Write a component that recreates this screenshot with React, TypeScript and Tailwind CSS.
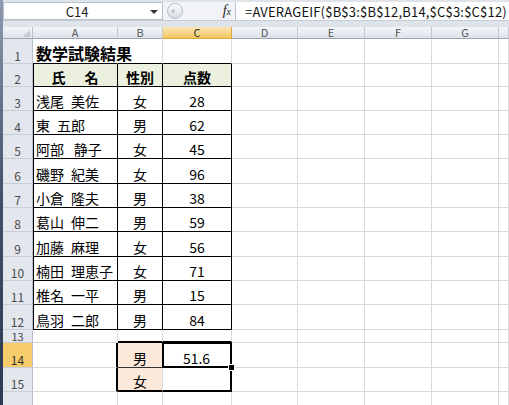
import React from "react";

const FONT = "font-['Noto_Sans_CJK_JP','Noto_Sans',sans-serif]";

const students = [
  ["浅尾\u2002美佐", "女", "28"],
  ["東\u2002五郎", "男", "62"],
  ["阿部\u2002\u2009静子", "女", "45"],
  ["磯野\u2002紀美", "女", "96"],
  ["小倉\u2002隆夫", "男", "38"],
  ["葛山\u2002伸二", "男", "59"],
  ["加藤\u2002麻理", "女", "56"],
  ["楠田\u2002理恵子", "女", "71"],
  ["椎名\u2002一平", "男", "15"],
  ["鳥羽\u2002二郎", "男", "84"],
];

const colWidths = ["w-[85px]", "w-[45px]", "w-[69px]", "w-[66px]", "w-[67px]", "w-[67px]", "w-[67px]", "flex-1"];
const colNames = ["A", "B", "C", "D", "E", "F", "G", ""];

// heights of rows 1..16
const rowHeights = [
  "h-[25px]", "h-[23px]",
  "h-[24px]", "h-[24px]", "h-[24px]", "h-[25px]", "h-[24px]",
  "h-[24px]", "h-[25px]", "h-[24px]", "h-[24px]", "h-[25px]",
  "h-[13px]", "h-[25px]", "h-[24px]", "h-[25px]",
];

function borders(r: number, c: number) {
  let right = "border-r border-r-[#d9d9d9]";
  let bottom = "border-b border-b-[#d9d9d9]";
  let extra = "";
  if (r >= 2 && r <= 12 && c <= 2) {
    right = "border-r border-r-black";
    bottom = "border-b border-b-black";
    if (c === 0) extra = "shadow-[inset_1px_0_0_#000]";
  }
  if (r === 1 && c <= 2) bottom = "border-b border-b-black";
  if (r === 1 && c === 0) right = "border-r border-r-transparent";
  if (r === 13 && (c === 1 || c === 2)) bottom = "border-b-2 border-b-black";
  if ((r === 14 || r === 15) && (c === 0 || c === 2)) right = "border-r-2 border-r-black";
  if (r === 15 && (c === 1 || c === 2)) bottom = "border-b-2 border-b-black";
  if (r === 14 && c === 1) bottom = "border-b border-b-[#333]";
  return `${right} ${bottom} ${extra}`;
}

function background(r: number, c: number) {
  if (r === 2 && c <= 2) return "bg-[#ebf1de]";
  if ((r === 14 || r === 15) && c === 1) return "bg-[#fde9d9]";
  return "bg-white";
}

function content(r: number, c: number): React.ReactNode {
  if (r === 1 && c === 0)
    return <span className="relative z-10 pl-[3px] text-[16px] font-bold whitespace-nowrap">数学試験結果</span>;
  if (r === 2) {
    if (c === 0)
      return (
        <span className="w-full flex justify-center gap-[19px] font-bold">
          <span>氏</span>
          <span>名</span>
        </span>
      );
    if (c === 1) return <span className="w-full text-center font-bold">性別</span>;
    if (c === 2) return <span className="w-full text-center font-bold">点数</span>;
  }
  if (r >= 3 && r <= 12 && c <= 2) {
    const v = students[r - 3][c];
    if (c === 0) return <span className="pl-[3px] whitespace-pre">{v}</span>;
    return <span className="w-full text-center">{v}</span>;
  }
  if (r === 14 && c === 1) return <span className="w-full text-center">男</span>;
  if (r === 15 && c === 1) return <span className="w-full text-center">女</span>;
  if (r === 14 && c === 2) return <span className="w-full text-center">51.6</span>;
  return null;
}

const FormulaBar = () => (
  <div className="h-[27px] shrink-0 bg-[#dfe4ea] pt-[2px]">
    <div className="h-[19px] flex bg-[#f1f3f6] border-b border-b-[#c6ccd5]">
      <div className="w-[160px] bg-white border border-[#b9c1cc] flex items-center relative">
        <span className="flex-1 text-center pr-[12px] text-[13px] leading-none text-[#222]">C14</span>
        <span className="absolute right-[4px] top-[7px] w-0 h-0 border-l-[4px] border-r-[4px] border-t-[4px] border-l-transparent border-r-transparent border-t-[#333]" />
      </div>
      <div className="w-[72px] flex items-center">
        <div className="ml-[4px] w-[16px] h-[16px] rounded-full border border-[#b5bdc8] bg-gradient-to-b from-[#fdfdfe] to-[#d7dce3] flex items-center pl-[3px]">
          <div className="w-[4px] h-[4px] rounded-full bg-[#c3c9d1]" />
        </div>
        <div className="flex-1" />
        <span className="mr-[4px] font-['Liberation_Serif',serif] italic text-[14px] leading-none text-[#222]">
          f<span className="text-[10px]">x</span>
        </span>
      </div>
      <div className="flex-1 bg-white border-l border-l-[#b9c1cc] flex items-center pl-[9px] overflow-hidden">
        <span className="text-[13px] leading-none text-[#111] whitespace-nowrap tracking-[0.2px]">
          =AVERAGEIF($B$3:$B$12,B14,$C$3:$C$12)
        </span>
      </div>
    </div>
  </div>
);

const HeaderRow = () => (
  <div className="h-[12px] shrink-0 flex">
    <div className="w-[30px] relative bg-gradient-to-b from-[#f3f5f8] to-[#dde2e9] border-r border-r-[#b7c0cc] border-b border-b-[#9aa5b5]">
      <span className="absolute right-[2px] bottom-[1px] w-0 h-0 border-l-[7px] border-l-transparent border-b-[7px] border-b-[#c4cad2]" />
    </div>
    {colNames.map((n, c) => (
      <div
        key={c}
        className={`${colWidths[c]} flex items-center justify-center text-[11px] leading-none ${
          c === 2
            ? "bg-gradient-to-b from-[#fbe6b4] to-[#f3c65e] text-[#333] border-r border-r-[#e0a73b] border-b border-b-[#e0a73b]"
            : "bg-gradient-to-b from-[#f3f5f8] to-[#dde2e9] text-[#555] border-r border-r-[#c3c9d2] border-b border-b-[#9aa5b5]"
        }`}
      >
        {n}
      </div>
    ))}
  </div>
);

export default function App() {
  return (
    <div className={`w-[509px] h-[405px] overflow-hidden bg-white flex ${FONT}`}>
      <div className="w-[3px] h-full bg-gradient-to-b from-[#8e9bb0] via-[#3f4f68] to-[#2d3b52]" />
      <div className="flex-1 flex flex-col">
        <FormulaBar />
        <HeaderRow />
        {rowHeights.map((h, i) => {
          const r = i + 1;
          return (
            <div key={r} className={`${h} flex shrink-0`}>
              <div
                className={`w-[30px] flex justify-center leading-none border-r border-r-[#b7c0cc] border-b border-b-[#c8ced8] ${
                  r === 13 ? "items-center text-[11px]" : "items-end pb-[1px] text-[12px]"
                } ${r === 14 ? "bg-[#f6cd6a] text-[#333]" : "bg-[#e3e7ed] text-[#4a4a4a]"}`}
              >
                {r < 16 ? r : null}
              </div>
              {colWidths.map((w, c) => (
                <div
                  key={c}
                  className={`${w} relative flex items-end pb-[2px] text-[14px] leading-none text-black ${borders(r, c)} ${background(r, c)}`}
                >
                  {content(r, c)}
                  {r === 14 && c === 2 && (
                    <>
                      <span className="absolute left-[-1px] top-[-1px] right-[-2px] bottom-[-1px] border-2 border-black pointer-events-none" />
                      <span className="absolute right-[-5px] bottom-[-4px] w-[7px] h-[7px] bg-black border border-white z-10" />
                    </>
                  )}
                </div>
              ))}
            </div>
          );
        })}
      </div>
    </div>
  );
}
